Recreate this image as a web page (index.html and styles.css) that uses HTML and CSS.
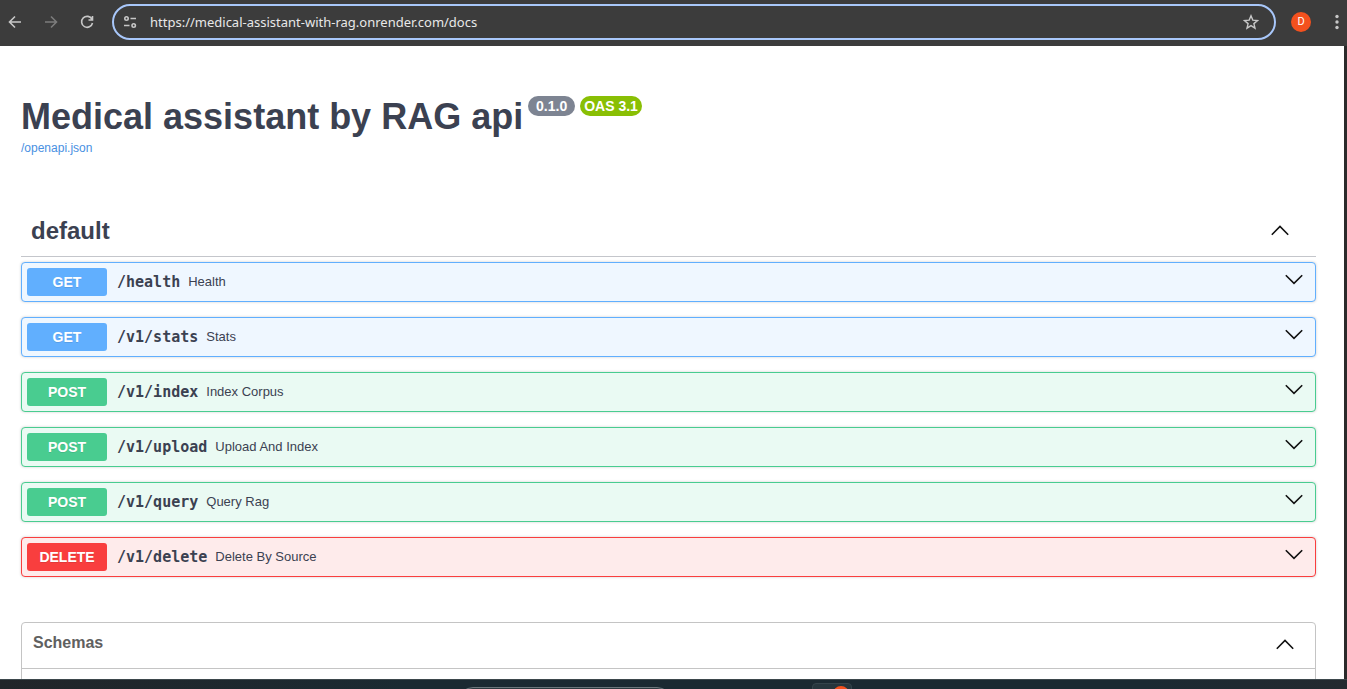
FILE: index.html
```html
<!DOCTYPE html>
<html lang="en">
<head>
<meta charset="utf-8">
<title>Medical assistant by RAG api</title>
<link rel="stylesheet" href="styles.css">
</head>
<body>
<svg class="defs" aria-hidden="true">
  <symbol id="down" viewBox="0 0 20 20"><path d="M1.800 5.200 10 13.300l8.200-8.100"/></symbol>
  <symbol id="up" viewBox="0 0 20 20"><path d="M1.800 13.700 10 5.500l8.200 8.200"/></symbol>
</svg>
<header class="toolbar">
  <nav class="nav">
    <button class="icon-btn" aria-label="Back"><svg viewBox="0 0 16 16"><path d="M14 8H3M8 2.5 2.5 8 8 13.5"/></svg></button>
    <button class="icon-btn dim" aria-label="Forward"><svg viewBox="0 0 16 16"><path d="M2 8h11M8 2.5 13.500 8 8 13.500"/></svg></button>
    <button class="icon-btn" aria-label="Reload"><svg viewBox="0 0 16 16"><path d="M13 5.300A5.500 5.500 0 1 0 13.500 9M13.500 2v4H9.500"/></svg></button>
  </nav>
  <div class="omnibox">
    <button class="icon-btn" aria-label="Site information"><svg viewBox="0 0 16 16"><circle cx="4.500" cy="4.500" r="1.700"/><path d="M8.500 4.500H14M2 11.500h5.500"/><circle cx="11.700" cy="11.500" r="1.700"/></svg></button>
    <input class="url" type="text" aria-label="Address" value="https://medical-assistant-with-rag.onrender.com/docs">
    <button class="icon-btn" aria-label="Bookmark"><svg viewBox="0 0 16 16"><path class="thin" d="m8 1.800 1.800 4.300 4.700.4-3.600 3.100 1.100 4.600L8 11.700l-4 2.500 1.100-4.600L1.500 6.500l4.700-.4z"/></svg></button>
  </div>
  <button class="avatar" aria-label="Profile">D</button>
  <button class="icon-btn" aria-label="Menu"><svg viewBox="0 0 16 16"><circle class="dot" cx="8" cy="2.500" r="1.700"/><circle class="dot" cx="8" cy="8" r="1.700"/><circle class="dot" cx="8" cy="13.500" r="1.700"/></svg></button>
</header>
<main class="page">
  <section class="info">
    <h1 class="title">Medical assistant by RAG api
      <span class="badges"><span class="badge">0.1.0</span><span class="badge oas">OAS 3.1</span></span>
    </h1>
    <a class="spec" href="#">/openapi.json</a>
  </section>
  <section class="group">
    <h2 class="group-head"><button class="group-btn">default<svg class="chev"><use href="#up"/></svg></button></h2>
    <div class="ops">
      <button class="op get"><span class="method">GET</span><span class="path">/health</span><span class="desc">Health</span><svg class="chev"><use href="#down"/></svg></button>
      <button class="op get"><span class="method">GET</span><span class="path">/v1/stats</span><span class="desc">Stats</span><svg class="chev"><use href="#down"/></svg></button>
      <button class="op post"><span class="method">POST</span><span class="path">/v1/index</span><span class="desc">Index Corpus</span><svg class="chev"><use href="#down"/></svg></button>
      <button class="op post"><span class="method">POST</span><span class="path">/v1/upload</span><span class="desc">Upload And Index</span><svg class="chev"><use href="#down"/></svg></button>
      <button class="op post"><span class="method">POST</span><span class="path">/v1/query</span><span class="desc">Query Rag</span><svg class="chev"><use href="#down"/></svg></button>
      <button class="op delete"><span class="method">DELETE</span><span class="path">/v1/delete</span><span class="desc">Delete By Source</span><svg class="chev"><use href="#down"/></svg></button>
    </div>
  </section>
  <section class="schemas">
    <h3 class="schemas-head"><button class="schemas-btn">Schemas<svg class="chev"><use href="#up"/></svg></button></h3>
  </section>
</main>
<footer class="taskbar"><span class="search"></span><span class="app"><span class="app-dot"></span></span></footer>
</body>
</html>
```
FILE: styles.css
```css
* { box-sizing: border-box; }
body {
  margin: 0;
  height: 100vh;
  display: flex;
  flex-direction: column;
  overflow: hidden;
  background: #fff;
  color: #3b4151;
  font-family: "Liberation Sans", Arial, sans-serif;
}
button, input { font: inherit; color: inherit; background: none; border: 0; padding: 0; margin: 0; }
svg { fill: none; stroke: currentColor; }
.defs { display: none; }

.toolbar {
  flex: none;
  display: flex;
  align-items: center;
  height: 46px;
  padding: 0 2px 2px 7px;
  background: #3c3c3c;
  color: #c7c7c7;
}
.nav { display: flex; gap: 20px; margin-right: 17px; }
.icon-btn { flex: none; width: 16px; height: 16px; }
.icon-btn svg { display: block; width: 16px; height: 16px; stroke-width: 1.6; }
.icon-btn .thin { stroke-width: 1.4; }
.icon-btn .dot { fill: currentColor; stroke: none; }
.dim { color: #7c7c7c; }
.omnibox {
  flex: 1;
  display: flex;
  align-items: center;
  gap: 12px;
  height: 36px;
  padding: 0 15px 0 8px;
  border: 2px solid #a8c7fa;
  border-radius: 18px;
}
.url {
  flex: 1;
  min-width: 0;
  outline: 0;
  color: #e8e8e8;
  font-family: "Noto Sans", "Open Sans", sans-serif;
  font-size: 13px;
}
.avatar {
  width: 20px;
  height: 20px;
  margin: 0 18px 0 15px;
  border-radius: 50%;
  background: #f4511e;
  color: #fff;
  font-family: Roboto, sans-serif;
  font-size: 11px;
  line-height: 20px;
}

.page {
  flex: 1;
  min-height: 0;
  overflow: hidden;
  padding: 48px 28px 0 21px;
  border-right: 3px solid #2b2b2b;
}
.title { display: flex; gap: 5px; margin: 0; font-size: 36px; line-height: 46px; }
.badges { display: flex; align-items: flex-start; gap: 5px; padding-top: 2px; }
.badge {
  padding: 0 4px;
  min-width: 47px;
  border-radius: 10px;
  background: #7d8492;
  color: #fff;
  font-size: 14px;
  line-height: 20px;
  text-align: center;
}
.oas { background: #89bf04; }
.spec {
  display: block;
  width: max-content;
  color: #4990e2;
  font-size: 12px;
  line-height: 16px;
  text-decoration: none;
}
.group { margin-top: 50px; }
.group-head { margin: 0; font-size: 24px; border-bottom: 1px solid #c4c6cb; }
.group-btn {
  display: flex;
  align-items: center;
  justify-content: space-between;
  width: 100%;
  height: 50px;
  padding: 0 26px 0 10px;
  font-weight: bold;
}
.chev { flex: none; width: 20px; height: 20px; stroke: #111; stroke-width: 1.6; }
.ops { display: grid; gap: 15px; padding-top: 5px; }
.op {
  display: flex;
  align-items: center;
  width: 100%;
  height: 40px;
  padding: 0 11px 0 5px;
  border: 1px solid;
  border-radius: 4px;
  box-shadow: 0 0 3px rgba(0, 0, 0, .19);
}
.method {
  width: 80px;
  border-radius: 3px;
  color: #fff;
  font-size: 14px;
  font-weight: bold;
  line-height: 28px;
  text-shadow: 0 1px 0 rgba(0, 0, 0, .1);
}
.path {
  padding: 0 8px 0 10px;
  font-family: "DejaVu Sans Mono", monospace;
  font-size: 15px;
  font-weight: bold;
}
.desc { flex: 1; padding-bottom: 2px; font-size: 13px; text-align: left; }
.op .chev { margin-bottom: 4px; }
.get { border-color: #61affe; background: #eff7ff; }
.get .method { background: #61affe; }
.post { border-color: #49cc90; background: #eafaf3; }
.post .method { background: #49cc90; }
.delete { border-color: #f93e3e; background: #feebeb; }
.delete .method { background: #f93e3e; }
.op .path, .op .desc { color: #3b4151; }

.schemas { height: 120px; margin-top: 45px; border: 1px solid #c4c4c4; border-radius: 4px; }
.schemas-head { margin: 0; border-bottom: 1px solid #c4c4c4; font-size: 16px; }
.schemas-btn {
  display: flex;
  align-items: center;
  justify-content: space-between;
  width: 100%;
  height: 45px;
  padding: 0 20px 6px 11px;
  color: #606060;
  font-weight: bold;
}
.schemas-btn .chev { margin-top: 4px; }

.taskbar {
  flex: none;
  display: flex;
  align-items: flex-start;
  height: 10px;
  overflow: hidden;
  border-top: 1px solid #3d484c;
  background: linear-gradient(90deg, #212529 0, #1b2a32 30%, #1b2a32 85%, #242a30);
}
.search { width: 214px; height: 30px; margin: 7px 140px 0 34%; border: 1px solid #6b777c; border-radius: 15px; background: #2c393f; }
.app { width: 40px; height: 36px; margin-top: 3px; border: 1px solid #34444b; border-radius: 4px; background: #26363d; }
.app-dot { display: block; width: 16px; height: 16px; margin: 2px 0 0 20px; border-radius: 50%; background: #f4511e; }
```
